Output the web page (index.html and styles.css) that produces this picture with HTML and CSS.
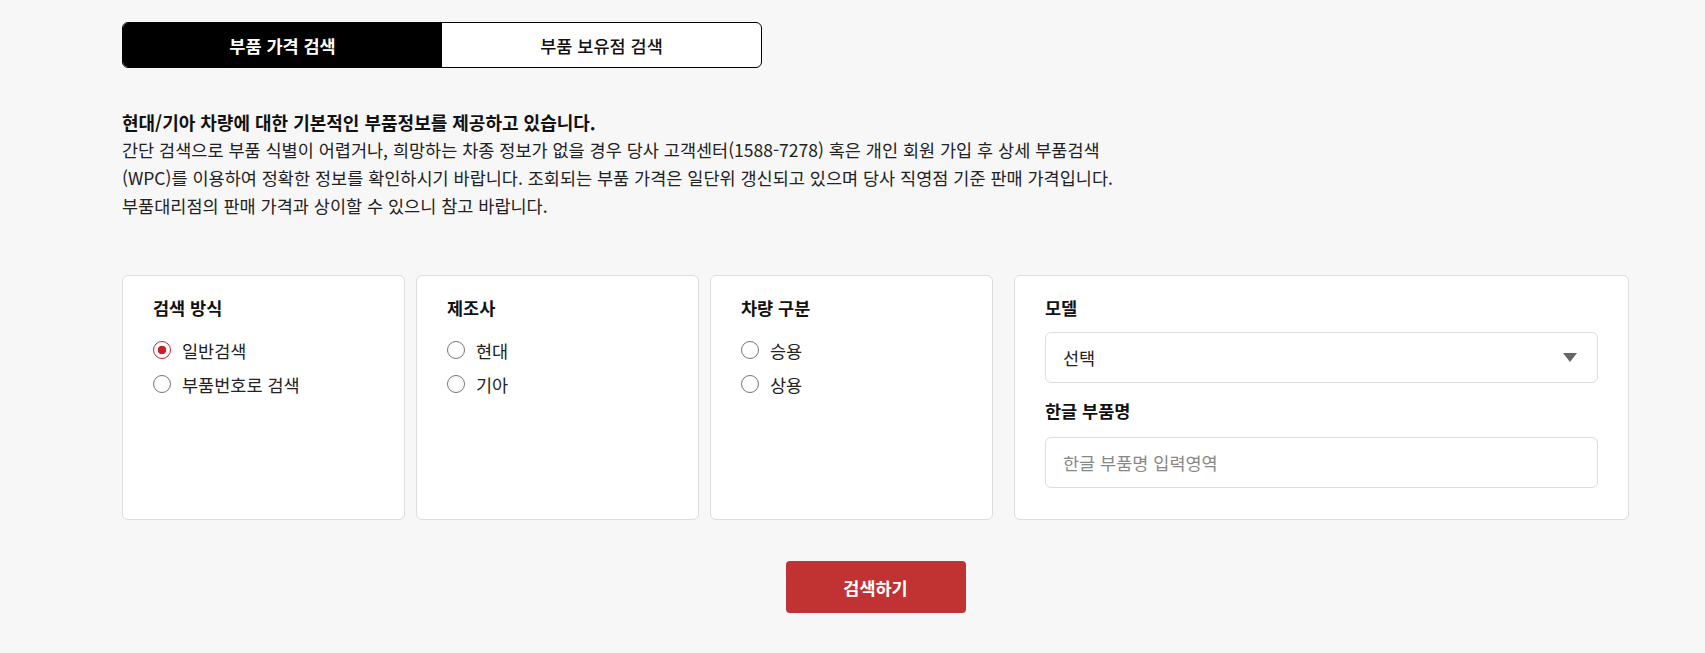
FILE: index.html
```html
<!DOCTYPE html>
<html lang="ko">
<head>
  <meta charset="UTF-8" />
  <title>부품 가격 검색</title>
  <link rel="stylesheet" href="styles.css">
</head>
<body>
  <div class="wrap">
    <div class="tabs">
      <a href="#" class="tab active">부품 가격 검색</a>
      <a href="#" class="tab">부품 보유점 검색</a>
    </div>

    <div class="info">
      <p class="info-title">현대/기아 차량에 대한 기본적인 부품정보를 제공하고 있습니다.</p>
      <p>간단 검색으로 부품 식별이 어렵거나, 희망하는 차종 정보가 없을 경우 당사 고객센터(1588-7278) 혹은 개인 회원 가입 후 상세 부품검색<br>
      (WPC)를 이용하여 정확한 정보를 확인하시기 바랍니다. 조회되는 부품 가격은 일단위 갱신되고 있으며 당사 직영점 기준 판매 가격입니다.<br>
      부품대리점의 판매 가격과 상이할 수 있으니 참고 바랍니다.</p>
    </div>

    <form class="search">
      <div class="search-row">
        <div class="card-group">
          <div class="card">
            <div class="card-title">검색 방식</div>
            <label class="radio"><input type="radio" name="type" checked> 일반검색</label>
            <label class="radio"><input type="radio" name="type"> 부품번호로 검색</label>
          </div>
          <div class="card">
            <div class="card-title">제조사</div>
            <label class="radio"><input type="radio" name="maker"> 현대</label>
            <label class="radio"><input type="radio" name="maker"> 기아</label>
          </div>
          <div class="card">
            <div class="card-title">차량 구분</div>
            <label class="radio"><input type="radio" name="kind"> 승용</label>
            <label class="radio"><input type="radio" name="kind"> 상용</label>
          </div>
        </div>

        <div class="card card-model">
          <div class="card-title">모델</div>
          <div class="select">
            <span>선택</span>
            <svg width="14" height="10" viewBox="0 0 14 10"><path d="M0 0H14L7 9Z" fill="#666"/></svg>
          </div>
          <div class="card-title second">한글 부품명</div>
          <input class="text-input" type="text" placeholder="한글 부품명 입력영역">
        </div>
      </div>

      <div class="actions">
        <button type="button" class="btn-search">검색하기</button>
      </div>
    </form>
  </div>
</body>
</html>
```

FILE: styles.css
```css
body {
  margin: 0;
  background: #f7f7f7;
  font-family: "Noto Sans CJK KR", "Noto Sans", sans-serif;
  font-size: 17.5px;
  color: #222;
}

.wrap {
  width: 1507px;
  padding: 22px 0 0 122px;
}

.tabs {
  display: flex;
  width: 640px;
  height: 46px;
  border: 1px solid #000;
  border-radius: 6px;
  overflow: hidden;
  box-sizing: border-box;
  background: #fff;
}

.tab {
  flex: 1;
  display: flex;
  align-items: center;
  justify-content: center;
  text-decoration: none;
  font-size: 17.5px;
  font-weight: 500;
  color: #111;
}

.tab.active {
  background: #000;
  color: #fff;
  font-weight: 700;
}

.info {
  margin-top: 40px;
  font-size: 17.5px;
  line-height: 28px;
}

.info p {
  margin: 0;
}

.info-title {
  font-size: 18px;
  font-weight: 700;
  color: #111;
}

.search {
  margin-top: 55px;
}

.search-row {
  display: flex;
  gap: 21px;
}

.card-group {
  display: flex;
  gap: 11px;
}

.card {
  width: 283px;
  height: 245px;
  box-sizing: border-box;
  padding: 20px 30px 30px;
  background: #fff;
  border: 1px solid #ddd;
  border-radius: 6px;
}

.card-model {
  width: 615px;
}

.card-title {
  font-size: 17.5px;
  line-height: 24px;
  font-weight: 700;
  color: #111;
  margin-bottom: 18px;
}

.card-model .card-title {
  margin-bottom: 12px;
}

.card-model .card-title.second {
  margin-top: 16px;
  margin-bottom: 14px;
}

.radio {
  display: flex;
  align-items: center;
  height: 24px;
  margin-bottom: 10px;
  font-size: 17.5px;
  color: #222;
  cursor: pointer;
}

.radio input {
  appearance: none;
  width: 18px;
  height: 18px;
  margin: 0 11px 0 0;
  border: 1px solid #767676;
  border-radius: 50%;
  background: #fff;
}

.radio input:checked {
  border-color: #c8202a;
  background: radial-gradient(circle, #c8202a 0 4px, #fff 4.6px);
}

.select {
  display: flex;
  align-items: center;
  justify-content: space-between;
  height: 51px;
  box-sizing: border-box;
  padding: 0 20px 0 17px;
  border: 1px solid #ddd;
  border-radius: 6px;
  font-size: 17.5px;
  color: #222;
}

.text-input {
  display: block;
  width: 100%;
  height: 51px;
  box-sizing: border-box;
  padding: 0 17px;
  border: 1px solid #ddd;
  border-radius: 6px;
  font-family: inherit;
  font-size: 17.5px;
  color: #222;
}

.text-input::placeholder {
  color: #888;
}

.actions {
  display: flex;
  justify-content: center;
  margin-top: 41px;
}

.btn-search {
  width: 180px;
  height: 52px;
  border: 0;
  border-radius: 4px;
  background: #c13232;
  color: #fff;
  font-family: inherit;
  font-size: 17.5px;
  font-weight: 700;
}
```
